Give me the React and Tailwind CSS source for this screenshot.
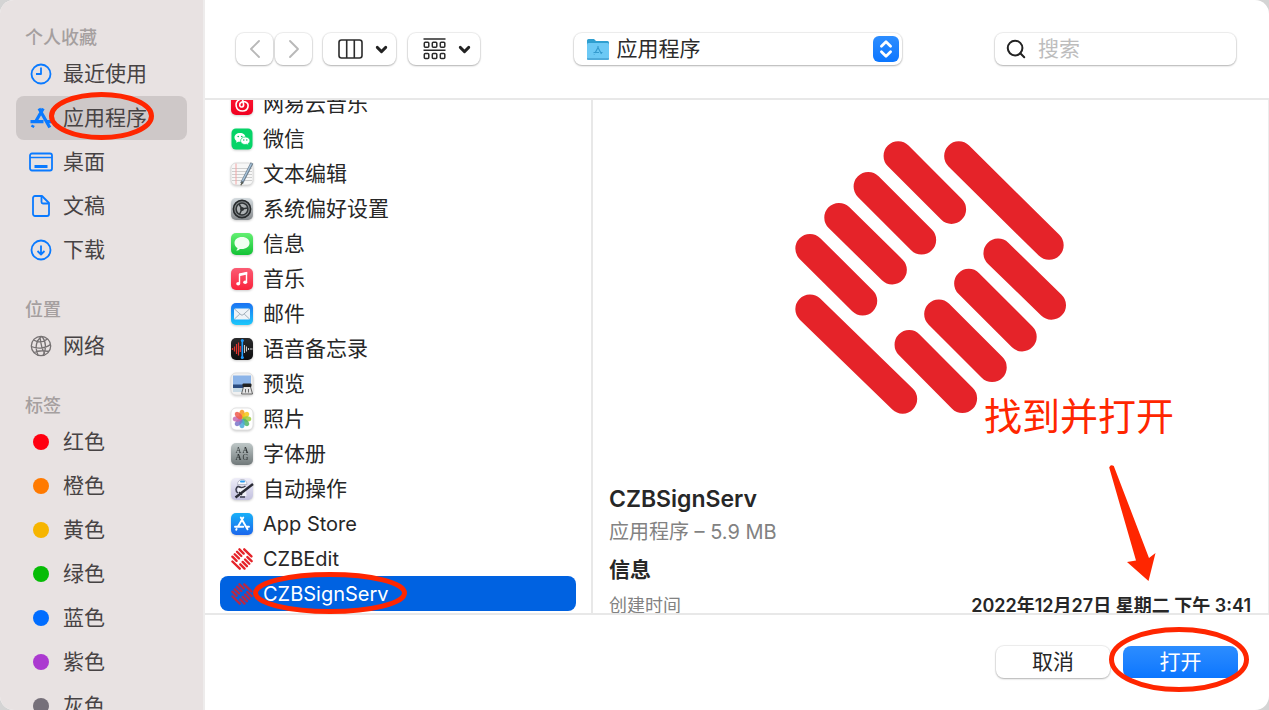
import { useState } from "react";
import { ChevronDown, ChevronLeft, ChevronRight, ChevronsUpDown, Search } from "lucide-react";

const FAVORITES = [
	{ name: '最近使用', icon: 'clock' },
	{ name: '应用程序', icon: 'apps' },
	{ name: '桌面', icon: 'desktop' },
	{ name: '文稿', icon: 'document' },
	{ name: '下载', icon: 'download' }
];

const LOCATIONS = [
	{ name: '网络', icon: 'network' }
];

const TAGS = [
	{ name: '红色', color: 'bg-[#ff0010]' },
	{ name: '橙色', color: 'bg-[#ff7a00]' },
	{ name: '黄色', color: 'bg-[#f6b500]' },
	{ name: '绿色', color: 'bg-[#06bc06]' },
	{ name: '蓝色', color: 'bg-[#006dff]' },
	{ name: '紫色', color: 'bg-[#ab39d0]' },
	{ name: '灰色', color: 'bg-[#76707a]' }
];

const FILES = [
	{ name: '网易云音乐', icon: 'netease' },
	{ name: '微信', icon: 'wechat' },
	{ name: '文本编辑', icon: 'textedit' },
	{ name: '系统偏好设置', icon: 'settings' },
	{ name: '信息', icon: 'messages' },
	{ name: '音乐', icon: 'music' },
	{ name: '邮件', icon: 'mail' },
	{ name: '语音备忘录', icon: 'voice' },
	{ name: '预览', icon: 'preview' },
	{ name: '照片', icon: 'photos' },
	{ name: '字体册', icon: 'fontbook' },
	{ name: '自动操作', icon: 'automator' },
	{ name: 'App Store', icon: 'appstore', latin: true },
	{ name: 'CZBEdit', icon: 'czb', latin: true },
	{ name: 'CZBSignServ', icon: 'czb', latin: true }
];

const PETALS = [
	[ 0, '#f7941e' ], [ 45, '#f5c518' ], [ 90, '#9bcb3c' ], [ 135, '#4fb56a' ],
	[ 180, '#4aa8d8' ], [ 225, '#7a74c9' ], [ 270, '#c56bb0' ], [ 315, '#ef5a4c' ]
];

const BankLogo = ({ className, color = '#e52329' }) => (
	<svg viewBox="42 30 820 830" className={ className } fill="none" stroke={ color } strokeWidth="88" strokeLinecap="round" aria-hidden="true">
		<path d="M355 80 515 240M265 172 425 332M177 265 337 422M90 358 248 515M90 540 368 810" />
		<path d="M537 80 808 348M655 372 815 528M567 463 727 623M477 555 637 715M388 647 548 808" />
	</svg>
);

const SIDEBAR_ICONS = {
	clock: (
		<>
			<circle cx="12" cy="12" r="9.5" />
			<path d="M12 5.5V12H7" />
		</>
	),
	apps: (
		<g strokeWidth="3.2">
			<path d="M14.2 2.5 7 15M10 2.500 20.800 21.500M1.500 15.600H14.500M18.300 15.600H22.500M4.400 19.200 3.200 21.300" />
		</g>
	),
	desktop: (
		<>
			<rect x="1" y="3.5" width="22" height="17" rx="2" />
			<path d="M1 7.5H23" strokeWidth="1.4" />
			<path d="M5.5 16.5H18.5" strokeWidth="3" />
		</>
	),
	document: (
		<>
			<path d="M6 2H13L20 9V20A2 2 0 0 1 18 22H6A2 2 0 0 1 4 20V4A2 2 0 0 1 6 2Z" />
			<path d="M12.5 2.5V8A1.5 1.5 0 0 0 14 9.5H19.5" />
		</>
	),
	download: (
		<>
			<circle cx="12" cy="12" r="9.5" />
			<path d="M12 7.5V16.5M8.5 13 12 16.5 15.5 13" />
		</>
	),
	network: (
		<g strokeWidth="1.3">
			<circle cx="12" cy="12" r="9.7" />
			<path d="M13 2.3C6.5 7 6 14 9 21.3M13 2.3C17.5 8 17.5 16 14 21.5M4.5 6C9 8.5 14 8.5 18.5 5M2.3 12.5C8 15 16 15 21.5 10.5M5 18.5C9 16.5 15 16.5 20 17.5M11 2.4C11.5 8 12.5 15 16 20.5" />
		</g>
	)
};

const SidebarIcon = ({ name }) => (
	<svg
		viewBox="0 0 24 24"
		className={ name === 'network' ? 'size-6 shrink-0 text-[#757172]' : 'size-6 shrink-0 text-[#0a7aff]' }
		fill="none"
		stroke="currentColor"
		strokeWidth="1.8"
		strokeLinejoin="round"
		aria-hidden="true"
	>
		{ SIDEBAR_ICONS[name] }
	</svg>
);

const Tile = ({ id, from, to }) => (
	<>
		<defs>
			<linearGradient id={ id } x1="0" y1="0" x2="0" y2="1">
				<stop offset="0" stopColor={ from } />
				<stop offset="1" stopColor={ to } />
			</linearGradient>
		</defs>
		<rect x="1" y="1" width="22" height="22" rx="5" fill={ `url(#${ id })` } />
	</>
);

const FILE_ICONS = {
	netease: (
		<>
			<Tile id="netease" from="#ff1a35" to="#f00020" />
			<path d="M15.5 5.5C13.5 4.5 12.3 5.5 12.5 7L13.6 12.5C13.9 15.5 10 15.8 9.7 13.2C9.4 10.5 12.5 9 15 9.8C20 11.5 18.7 19 12.5 19C5.5 19 3.8 10.5 9.5 7.5" fill="none" stroke="#fff" strokeWidth="1.6" strokeLinecap="round" />
		</>
	),
	wechat: (
		<>
			<rect x="1.5" y="1.5" width="21" height="21" rx="4.5" fill="#06d468" />
			<path d="M10 6C6.7 6 4.5 8 4.5 10.5C4.5 12 5.3 13.2 6.5 14L6.1 15.8 8.2 14.7C11 15.3 15.5 14 15.5 10.5C15.5 8 13.3 6 10 6Z" fill="#fff" />
			<path d="M15.3 10C12.6 10 10.6 11.6 10.6 13.8C10.6 16.4 13.5 18 16.6 17.3L18.4 18.2 18 16.7C19.2 16 19.9 15 19.9 13.8C19.9 11.6 18 10 15.3 10Z" fill="#fff" stroke="#06d468" strokeWidth=".7" />
			<g fill="#06b95c">
				<circle cx="8.2" cy="9.5" r=".8" />
				<circle cx="11.8" cy="9.5" r=".8" />
				<circle cx="13.8" cy="13" r=".7" />
				<circle cx="16.8" cy="13" r=".7" />
			</g>
		</>
	),
	textedit: (
		<>
			<rect x="1" y="1" width="22" height="22" rx="5" fill="#f7f7f7" stroke="#d5d5d5" strokeWidth=".8" />
			<path d="M2 6.5H22M2 9.5H22M2 12.5H22M2 15.5H22M2 18.5H22" stroke="#c8c8c8" strokeWidth=".9" />
			<path d="M6 1.5V22.5" stroke="#f4a6a6" strokeWidth="1" />
			<path d="M22 1 11.5 21.5" stroke="#6c7d8c" strokeWidth="3" />
			<path d="M21.5 1.5 12.5 19" stroke="#a9c6de" strokeWidth="1.3" />
			<path d="M12.5 20 10.8 23.2" stroke="#555544" strokeWidth="1.2" />
		</>
	),
	settings: (
		<>
			<Tile id="settings" from="#d5dce0" to="#85898c" />
			<circle cx="12" cy="12" r="8.6" fill="#858a8c" stroke="#26292b" strokeWidth="1.6" />
			<circle cx="12" cy="12" r="5.9" fill="#aeb2b4" stroke="#303436" strokeWidth="1.5" />
			<path d="M12 12 17.5 11M12 12 9 7M12 12 9.5 17.5" stroke="#303436" strokeWidth="1.5" />
			<circle cx="12" cy="12" r="2" fill="#303436" />
		</>
	),
	messages: (
		<>
			<Tile id="messages" from="#63f071" to="#12c235" />
			<path d="M12 5C7.5 5 4.5 7.6 4.5 11C4.5 13.2 5.7 15 7.6 16.1C7.5 17.1 7 17.9 6.2 18.6C7.8 18.5 9 17.8 9.8 16.9C15.5 17.6 19.5 15 19.5 11C19.5 7.6 16.5 5 12 5Z" fill="#f1fff1" />
		</>
	),
	music: (
		<>
			<Tile id="music" from="#fb5c74" to="#fa233b" />
			<path d="M9.5 16.5V7.5L16.5 6V15" fill="none" stroke="#fff" strokeWidth="1.4" />
			<path d="M9 6.5 17.2 4.7V7.5L9 9.3Z" fill="#fff" />
			<ellipse cx="8.2" cy="16.8" rx="2" ry="1.7" fill="#fff" />
			<ellipse cx="15.2" cy="15.3" rx="2" ry="1.7" fill="#fff" />
		</>
	),
	mail: (
		<>
			<Tile id="mail" from="#1b72f2" to="#1cc8fb" />
			<rect x="4" y="6.5" width="16" height="11" rx="1.5" fill="#eef3f7" />
			<path d="M4.5 7 11 12.8Q12 13.5 13 12.8L19.5 7M4.5 17 9.8 12M19.5 17 14.2 12" fill="none" stroke="#9aa7b2" strokeWidth=".9" />
		</>
	),
	voice: (
		<>
			<Tile id="voice" from="#2a2a2c" to="#0d0d0f" />
			<path d="M2.5 11V13M4.5 9.5V14.5M6.5 7V17M8.5 5.5V18.5M10.3 9V15" stroke="#e0342f" strokeWidth="1.2" />
			<path d="M14.5 8V16M16.5 9.5V14.5M18.5 11V13M20 12H22.5" stroke="#c9c9c9" strokeWidth="1.1" />
			<path d="M12.3 3V21" stroke="#1e9bff" strokeWidth="1.6" />
			<circle cx="12.3" cy="3.5" r="1.5" fill="#1e9bff" />
			<circle cx="12.3" cy="20.5" r="1.5" fill="#1e9bff" />
		</>
	),
	preview: (
		<>
			<rect x="1" y="1" width="22" height="22" rx="5" fill="#f1f1f1" stroke="#d8d8d8" strokeWidth=".7" />
			<path d="M3 3.5H21V14H3Z" fill="#8cb4e8" />
			<path d="M3 12.5H21V16H3Z" fill="#2b4c80" />
			<path d="M3 16H21V20H3Z" fill="#c9dbe6" />
			<path d="M13.500 14.500H20.500L22.500 22H11.500Z" fill="#e2e2e2" stroke="#444" strokeWidth=".8" />
			<rect x="12.500" y="11.500" width="9" height="3.500" rx="1" fill="#222" />
			<path d="M15.500 17V20.500M18.500 17V20.500" stroke="#666" strokeWidth="1" />
		</>
	),
	photos: (
		<>
			<rect x="1" y="1" width="22" height="22" rx="5" fill="#fff" stroke="#dcdcdc" strokeWidth=".8" />
			{
				PETALS.map(([ angle, fill ]) => (
					<ellipse key={ angle } cx="12" cy="7.2" rx="2.7" ry="4.5" fill={ fill } fillOpacity=".85" transform={ `rotate(${ angle } 12 12)` } />
				))
			}
		</>
	),
	fontbook: (
		<>
			<Tile id="fontbook" from="#bfc8c8" to="#71797a" />
			<g fontFamily="Liberation Serif, serif" fontSize="8" fill="#303536" textAnchor="middle">
				<text x="8.5" y="10.5">A</text>
				<text x="15.5" y="10.5" fontWeight="bold">A</text>
				<text x="8.5" y="18" fontWeight="bold">A</text>
				<text x="15.5" y="18">G</text>
			</g>
		</>
	),
	automator: (
		<>
			<Tile id="automator" from="#eeedf8" to="#c2c0df" />
			<path d="M7.5 7.500C7.500 .8 17 .8 17 7.500Z" fill="#f8f9fd" stroke="#a4a6b8" strokeWidth=".7" />
			<rect x="10" y="3.500" width="5" height="2" rx="1" fill="#2c9df0" />
			<path d="M8 9H15.500L16.500 19H8Z" fill="#f0f1f8" />
			<path d="M8.500 9C5.500 10.500 5 14 8 16M8.500 9.500Q12 11.500 15.500 9M10 20H15" fill="none" stroke="#3c3e4e" strokeWidth="1.5" />
			<path d="M5.500 20.500 23 7" stroke="#292a34" strokeWidth="2.400" />
			<path d="M9 15 12 18" stroke="#292a34" strokeWidth="1.5" />
		</>
	),
	appstore: (
		<>
			<Tile id="appstore" from="#18b0f8" to="#1b66ec" />
			<path d="M13.3 5.5 8 14.5M10.8 5.5 17.5 17.3M5 14.8H13.3M16.2 14.8H19M6.6 17 6.2 17.7" fill="none" stroke="#fff" strokeWidth="1.9" strokeLinecap="round" />
		</>
	)
};

const FileIcon = ({ name, selected }) => {
	if (name === 'czb') return (
		<span className="flex items-center justify-center size-6 shrink-0">
			<BankLogo className="size-[22px]" color={ selected ? '#b82846' : '#e52329' } />
		</span>
	);

	return (
		<svg viewBox="0 0 24 24" className="size-6 shrink-0 drop-shadow-[0_1px_1px_rgba(0,0,0,.2)]" aria-hidden="true">
			{ FILE_ICONS[name] }
		</svg>
	);
};

const SidebarGroup = ({ title, children }) => (
	<section>
		<h2 className="flex items-center h-[30px] pl-[9px] text-[18px] font-medium text-[#a59f9f]">{ title }</h2>
		<ul>{ children }</ul>
	</section>
);

const SidebarItem = ({ name, active, children }) => (
	<li>
		<button
			type="button"
			className={ `flex items-center w-full h-[44px] pl-[13px] gap-[10px] rounded-lg text-[21px] text-[#474344] ${ active ? 'bg-[#cec8c8]' : '' }` }
		>
			{ children }
			{ name }
		</button>
	</li>
);

const Sidebar = () => (
	<aside className="flex flex-col shrink-0 w-[205px] pt-[22px] pl-4 pr-4 gap-[22px] bg-[#e8e2e2] border-r-2 border-[#eeecec] overflow-hidden">
		<SidebarGroup title="个人收藏">
			{
				FAVORITES.map(({ name, icon }) => (
					<SidebarItem key={ name } name={ name } active={ icon === 'apps' }>
						<SidebarIcon name={ icon } />
					</SidebarItem>
				))
			}
		</SidebarGroup>
		<SidebarGroup title="位置">
			{
				LOCATIONS.map(({ name, icon }) => (
					<SidebarItem key={ name } name={ name }>
						<SidebarIcon name={ icon } />
					</SidebarItem>
				))
			}
		</SidebarGroup>
		<SidebarGroup title="标签">
			{
				TAGS.map(({ name, color }) => (
					<SidebarItem key={ name } name={ name }>
						<span className="flex items-center justify-center size-6 shrink-0">
							<span className={ `size-4 rounded-full ${ color }` } />
						</span>
					</SidebarItem>
				))
			}
		</SidebarGroup>
	</aside>
);

const CONTROL = 'flex items-center h-[32px] rounded-lg bg-white shadow-[0_0_1px_1px_rgba(0,0,0,.07),0_1px_2px_rgba(0,0,0,.25)]';

const FolderIcon = () => (
	<svg viewBox="0 0 24 24" className="size-6" aria-hidden="true">
		<path d="M1 3.5Q1 2 2.5 2H8L10 4H21.5Q23 4 23 5.5V12H1Z" fill="#2f9fd0" />
		<rect x="1" y="6" width="22" height="17" rx="1.5" fill="#6cc9f5" />
		<path d="M1 21V21.5Q1 23 2.5 23H21.5Q23 23 23 21.5V21Z" fill="#4fabdb" />
		<path d="M12.6 9.5 9 16M11.4 9.5 15.5 17M7.5 15.5H13M15 15.5H16.5M8 17.5 8.3 17" fill="none" stroke="#359bcf" strokeWidth="1.2" />
	</svg>
);

const Toolbar = ({ search, setSearch }) => (
	<header className="flex items-center shrink-0 h-[100px] pl-[31px] pr-[33px] border-b-2 border-[#e8e8e8]">
		<div className="flex gap-[2px]">
			<button type="button" aria-label="后退" className={ `${ CONTROL } justify-center w-[37px]` }>
				<ChevronLeft className="size-8 text-[#b8b8b8]" strokeWidth={ 1.4 } />
			</button>
			<button type="button" aria-label="前进" className={ `${ CONTROL } justify-center w-[37px]` }>
				<ChevronRight className="size-8 text-[#b8b8b8]" strokeWidth={ 1.4 } />
			</button>
		</div>
		<button type="button" aria-label="分栏" className={ `${ CONTROL } w-[73px] ml-[11px] pl-[15px] gap-[10px]` }>
			<svg viewBox="0 0 25 20" className="w-[25px] h-5" fill="none" stroke="#2b2b2b" strokeWidth="1.6" aria-hidden="true">
				<rect x="1" y="1" width="23" height="18" rx="2.5" />
				<path d="M8.7 1V19M16.3 1V19" />
			</svg>
			<ChevronDown className="size-[17px]" color="#222222" strokeWidth={ 4 } />
		</button>
		<button type="button" aria-label="群组" className={ `${ CONTROL } w-[72px] ml-3 pl-[15px] gap-[10px]` }>
			<svg viewBox="0 0 23 22" className="w-[23px] h-[22px]" fill="none" stroke="#2b2b2b" strokeWidth="1.5" aria-hidden="true">
				<path d="M.5 1H22.5M.5 12.2H22.5" />
				<rect x="1.3" y="4.2" width="4.5" height="5" rx="1" />
				<rect x="9.3" y="4.2" width="4.5" height="5" rx="1" />
				<rect x="17.3" y="4.2" width="4.5" height="5" rx="1" />
				<rect x="1.3" y="15.5" width="4.5" height="5" rx="1" />
				<rect x="9.3" y="15.5" width="4.5" height="5" rx="1" />
				<rect x="17.3" y="15.5" width="4.5" height="5" rx="1" />
			</svg>
			<ChevronDown className="size-[17px]" color="#222222" strokeWidth={ 4 } />
		</button>
		<div className="flex flex-1 justify-center">
			<button type="button" className={ `${ CONTROL } w-[328px] pl-[12px] pr-[3px] gap-[7px] text-[21px] text-[#2b2b2b]` }>
				<FolderIcon />
				应用程序
				<span className="flex items-center justify-center size-[26px] ml-auto rounded-md bg-gradient-to-b from-[#2c8dff] to-[#0a76ff] text-white">
					<ChevronsUpDown className="size-[22px]" strokeWidth={ 3 } />
				</span>
			</button>
		</div>
		<label className={ `${ CONTROL } w-[241px] pl-[10px] gap-[11px]` }>
			<Search className="size-[22px] shrink-0 text-[#222]" strokeWidth={ 2.2 } />
			<input
				type="text"
				aria-label="搜索"
				placeholder="搜索"
				value={ search }
				onChange={ e => setSearch(e.target.value) }
				className="w-full min-w-0 text-[21px] outline-none placeholder:text-[#bdbdbd]"
			/>
		</label>
	</header>
);

const FileList = ({ selected, setSelected }) => (
	<ul className="flex flex-col justify-end shrink-0 w-[388px] pl-[15px] pr-[15px] pb-[2px] border-r-2 border-[#e8e8e8] overflow-hidden">
		{
			FILES.map(({ name, icon, latin }) => (
				<li key={ name } className="shrink-0">
					<button
						type="button"
						onClick={ () => setSelected(name) }
						className={ `flex items-center w-full h-[35px] pl-[10px] gap-[9px] rounded-lg ${ latin ? 'text-[20px]' : 'text-[21px]' } ${ selected === name ? 'bg-[#0062e1] text-white' : 'text-[#272727]' }` }
					>
						<FileIcon name={ icon } selected={ selected === name } />
						{ name }
					</button>
				</li>
			))
		}
	</ul>
);

const Preview = ({ selected }) => (
	<article className="flex flex-col flex-1 min-w-0 pt-[39px] pl-[16px] pr-[17px] border-r border-[#ececec] overflow-hidden">
		<BankLogo className="w-[273px] h-[277px] shrink-0 self-center" />
		<h1 className="mt-[67px] text-[23px] leading-[32px] font-semibold text-[#272727]">{ selected }</h1>
		<p className="mt-[1px] text-[20px] leading-[32px] text-[#828282]">应用程序 – 5.9 MB</p>
		<h2 className="mt-[6px] text-[21px] leading-[32px] font-bold text-[#272727]">信息</h2>
		<dl className="flex justify-between mt-[4px] text-[18px] leading-[32px]">
			<dt className="text-[#828282]">创建时间</dt>
			<dd className="font-semibold text-[#272727]">2022年12月27日 星期二 下午 3:41</dd>
		</dl>
	</article>
);

const Circle = ({ className, width, height }) => (
	<svg width={ width } height={ height } className={ `absolute pointer-events-none ${ className }` } fill="none" stroke="#ff2600" strokeWidth="5" aria-hidden="true">
		<ellipse cx={ width / 2 } cy={ height / 2 } rx={ width / 2 - 2.5 } ry={ height / 2 - 2.5 } />
	</svg>
);

const Annotations = () => (
	<>
		<Circle className="left-[49px] top-[92px]" width={ 105 } height={ 48 } />
		<Circle className="left-[253px] top-[572px]" width={ 154 } height={ 42 } />
		<Circle className="right-[20px] bottom-[18px]" width={ 140 } height={ 65 } />
		<p className="absolute right-[95px] top-[392px] text-[38px] leading-[48px] text-[#ff2600] font-normal">找到并打开</p>
		<svg width="50" height="120" viewBox="0 0 50 120" className="absolute right-[111px] top-[463px] pointer-events-none" aria-hidden="true">
			<path d="M1.2 4.500Q2.500 .8 5.800 3L41 95 47.500 90 40.500 118 19 99 28 97.500Z" fill="#ff2600" />
		</svg>
	</>
);

export default function App() {
	const [ search, setSearch ] = useState('');
	const [ selected, setSelected ] = useState('CZBSignServ');

	return (
		<div className='h-screen bg-[#d4d4d4] font-[Inter,"Noto_Sans_CJK_SC",sans-serif]'>
			<main className="flex relative h-full rounded-[14px] bg-white overflow-hidden">
				<Sidebar />
				<div className="flex flex-col flex-1 min-w-0">
					<Toolbar search={ search } setSearch={ setSearch } />
					<div className="flex flex-1 min-h-0">
						<FileList selected={ selected } setSelected={ setSelected } />
						<Preview selected={ selected } />
					</div>
					<footer className="flex items-start justify-end shrink-0 h-[97px] pt-[31px] pr-[31px] gap-[13px] border-t-2 border-[#e8e8e8]">
						<button type="button" className={ `${ CONTROL } justify-center w-[114px] text-[21px] text-[#272727]` }>取消</button>
						<button type="button" className="flex items-center justify-center w-[115px] h-[32px] rounded-lg bg-gradient-to-b from-[#2c8dff] to-[#0a76ff] text-[21px] text-white">打开</button>
					</footer>
				</div>
				<Annotations />
			</main>
		</div>
	)
};
